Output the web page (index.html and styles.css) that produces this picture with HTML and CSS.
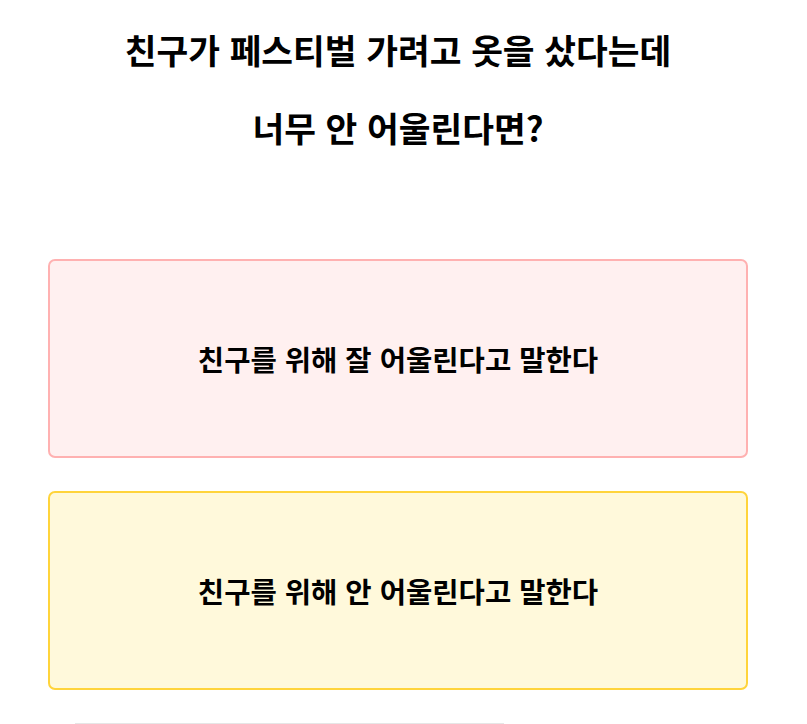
FILE: index.html
```html
<!DOCTYPE html>
<html lang="ko">
<head>
    <meta charset="UTF-8">
    <meta name="viewport" content="width=device-width, initial-scale=1.0">
    <title>페스티벌 옷 테스트</title>
    <link rel="stylesheet" href="styles.css">
</head>
<body>
    <div class="page">
        <h1 class="question">친구가 페스티벌 가려고 옷을 샀다는데<br>너무 안 어울린다면?</h1>

        <div class="choices">
            <button class="choice choice-pink">친구를 위해 잘 어울린다고 말한다</button>
            <button class="choice choice-yellow">친구를 위해 안 어울린다고 말한다</button>
        </div>

        <div class="bottom-box"></div>
    </div>
</body>
</html>
```

FILE: styles.css
```css
body {
    margin: 0;
    background: #ffffff;
    font-family: "Noto Sans CJK KR", "Noto Sans", sans-serif;
    color: #000000;
}

.page {
    width: 700px;
    margin-left: 48px;
}

.question {
    margin: 10px 0 0;
    font-size: 34.5px;
    font-weight: 700;
    line-height: 78px;
    text-align: center;
}

.choices {
    display: flex;
    flex-direction: column;
    gap: 33px;
    margin-top: 93px;
}

.choice {
    display: flex;
    align-items: center;
    justify-content: center;
    height: 199px;
    padding: 0;
    border: 2px solid;
    border-radius: 7px;
    font-family: inherit;
    font-size: 28.6px;
    font-weight: 700;
    color: #000000;
    cursor: pointer;
}

.choice-pink {
    background: #fff0f0;
    border-color: #ffb1b1;
}

.choice-yellow {
    background: #fff9db;
    border-color: #ffd43b;
}

.bottom-box {
    width: 429px;
    height: 40px;
    margin: 33px 0 0 27px;
    border-top: 1px solid #e6e6e6;
}
```
